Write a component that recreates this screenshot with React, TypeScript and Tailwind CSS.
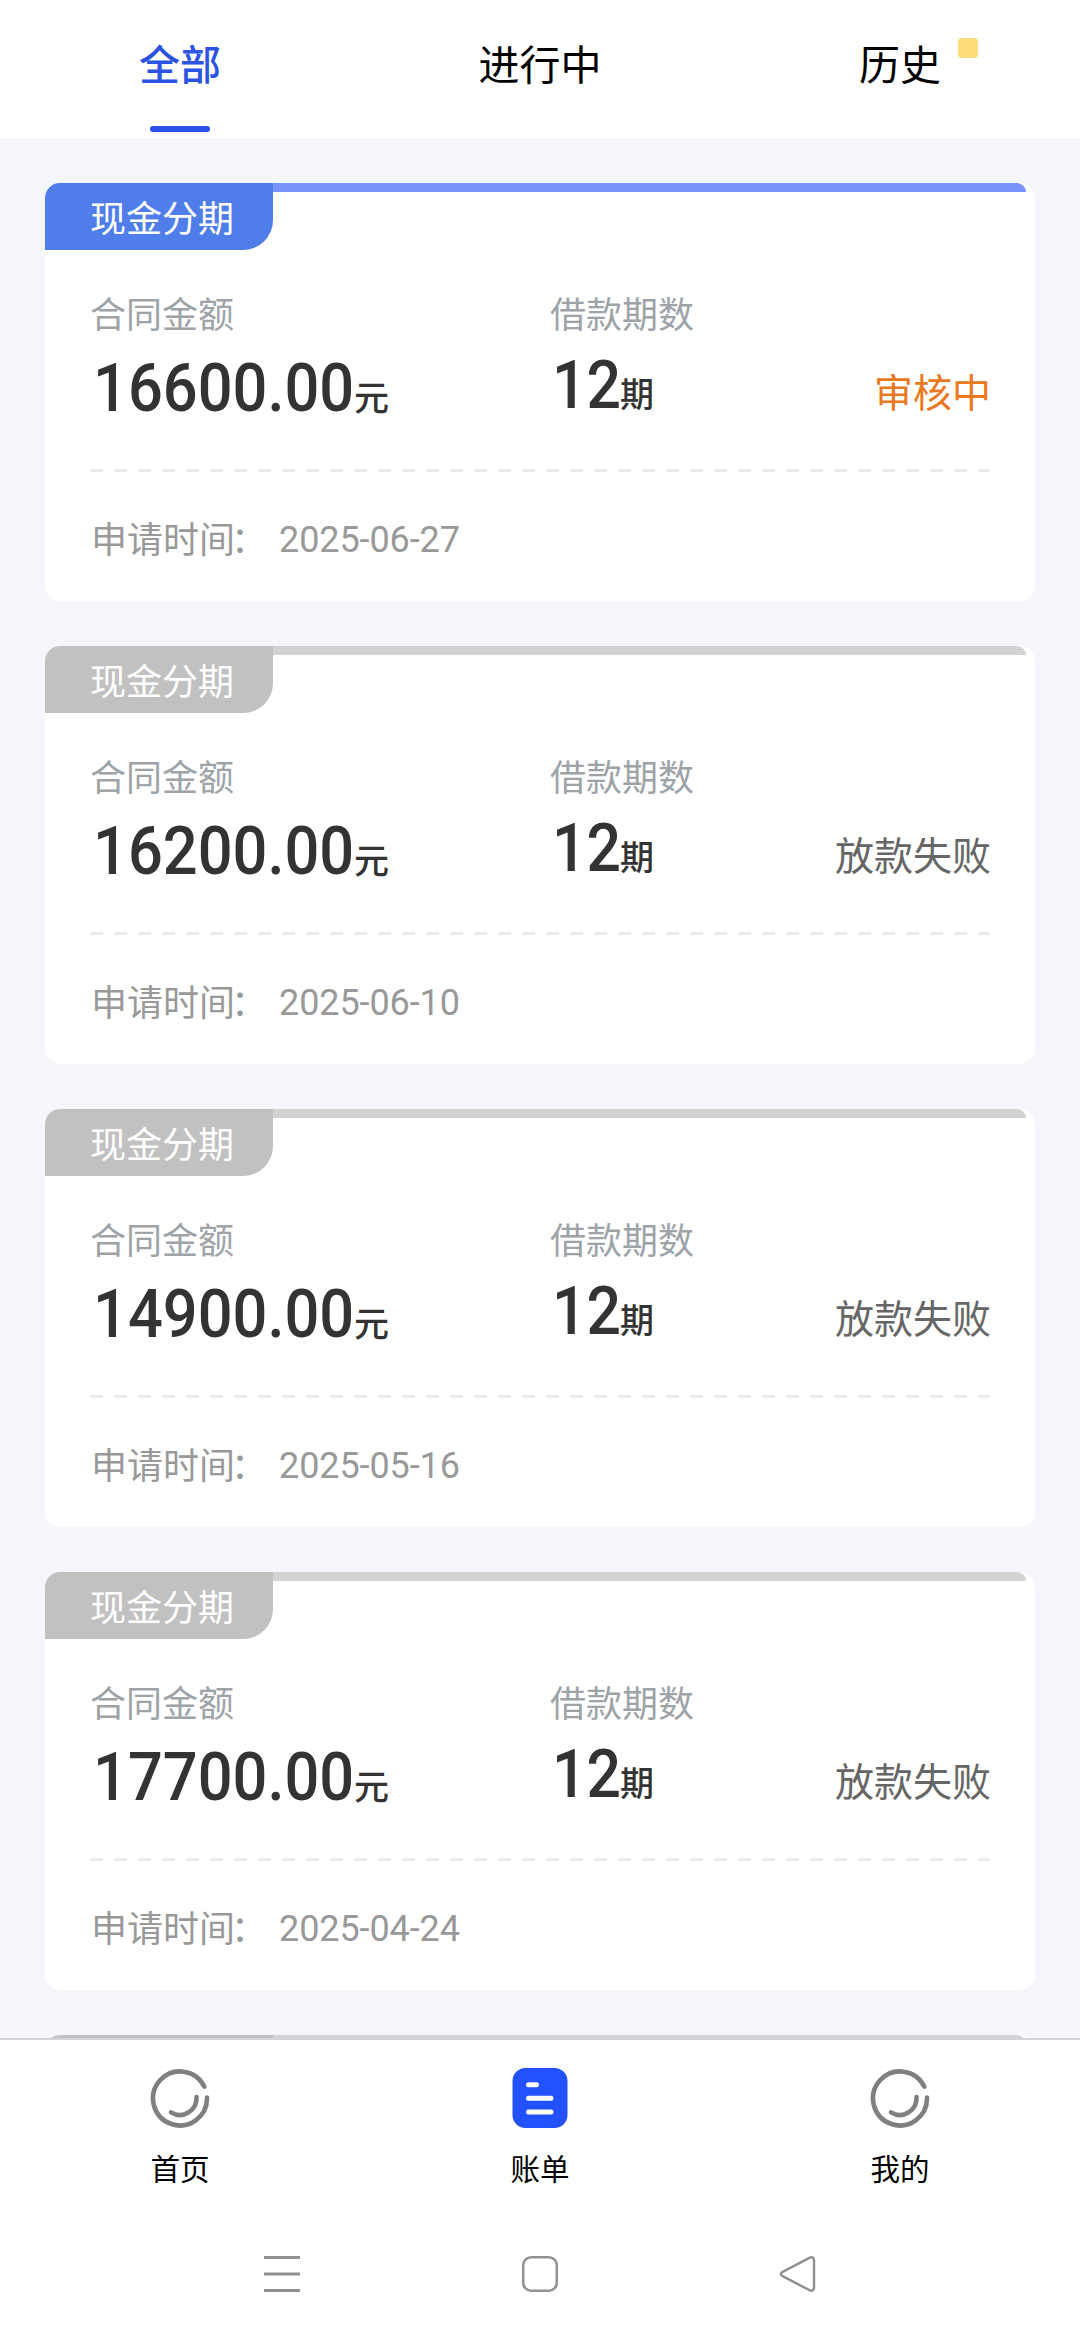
import { clsx } from 'clsx';

interface Bill {
  amount: string;
  periods: number;
  status: string;
  date: string;
  active?: boolean;
}

const tabs = [
  { label: '全部', active: true },
  { label: '进行中' },
  { label: '历史', badge: true },
];

const bills: Bill[] = [
  { amount: '16600.00', periods: 12, status: '审核中', date: '2025-06-27', active: true },
  { amount: '16200.00', periods: 12, status: '放款失败', date: '2025-06-10' },
  { amount: '14900.00', periods: 12, status: '放款失败', date: '2025-05-16' },
  { amount: '17700.00', periods: 12, status: '放款失败', date: '2025-04-24' },
];

function CardHeader({ title, active }: { title?: string; active?: boolean }) {
  return (
    <div className="flex items-start pr-[9px]">
      <div
        className={clsx(
          'flex h-[67px] w-[228px] items-center rounded-tl-[15px] rounded-br-[30px] pl-[45px] pt-[7px] text-[36px] leading-none text-white',
          active ? 'bg-[#4f7eea]' : 'bg-[#c1c1c1]',
        )}
      >
        {title}
      </div>
      <div className={clsx('h-[9px] flex-1 rounded-tr-[9px]', active ? 'bg-[#7893fa]' : 'bg-[#d2d2d2]')} />
    </div>
  );
}

function BillCard({ bill }: { bill: Bill }) {
  return (
    <div className="h-[418px] shrink-0 rounded-[15px] bg-white">
      <CardHeader title="现金分期" active={bill.active} />
      <div className="px-[45px]">
        <div className="flex h-[219px] pt-[44px]">
          <div className="w-[459px]">
            <div className="text-[36px] leading-[44px] text-[#9ea3a8]">合同金额</div>
            <div className="mt-[13px] flex items-baseline text-[#333]">
              <span className="ml-[3px] w-[262px] origin-left scale-x-[0.93] whitespace-nowrap text-[66px] font-medium leading-[76px]">{bill.amount}</span>
              <span className="-ml-px text-[35px] font-medium leading-none">元</span>
            </div>
          </div>
          <div className="flex-1 pl-px">
            <div className="text-[36px] leading-[44px] text-[#9ea3a8]">借款期数</div>
            <div className="mt-[10px] flex items-baseline text-[#333]">
              <span className="ml-[2px] w-[68px] origin-left scale-x-[0.92] text-[66px] font-medium leading-[76px]">{bill.periods}</span>
              <span className="relative -top-px text-[34px] font-medium leading-none">期</span>
            </div>
          </div>
          <div className={clsx('-mr-px pt-[75px] text-[39px] leading-[50px]', bill.active ? 'text-[#e9781f]' : 'text-[#666]')}>
            {bill.status}
          </div>
        </div>
        <div className="h-[3px] bg-[repeating-linear-gradient(90deg,#ebebeb_0_13px,transparent_13px_24px)]" />
        <div className="flex h-[132px] items-center pl-px pt-[5px] text-[36px] leading-none text-[#999]">
          <span className="w-[144px]">申请时间</span>
          <span className="-ml-[4px] w-[48px]">：</span>
          <span className="-mt-px tracking-[-0.1px]">{bill.date}</span>
        </div>
      </div>
    </div>
  );
}

function RingIcon() {
  return (
    <svg width="60" height="60" viewBox="0 0 60 60" fill="none" stroke="#7f7f7f" strokeWidth="4.6" strokeLinecap="round">
      <path d="M54.3 18.6A27 27 0 1 0 57 29.6" />
      <path d="M46.5 29A16.8 16.8 0 0 1 21 44.4" />
    </svg>
  );
}

function BillIcon() {
  return (
    <svg width="60" height="60" viewBox="0 0 60 60" fill="none">
      <rect x="2.5" y="0" width="55" height="60" rx="13" fill="#2251ff" />
      <path d="M18.5 16.8H26.5M18.5 30.3H41M18.5 44H41" stroke="#fff" strokeWidth="5" strokeLinecap="round" />
    </svg>
  );
}

const navItems = [
  { label: '首页', icon: <RingIcon /> },
  { label: '账单', icon: <BillIcon /> },
  { label: '我的', icon: <RingIcon /> },
];

export default function App() {
  return (
    <div className="flex h-[2340px] w-[1080px] flex-col overflow-hidden bg-[#f5f6fb] font-[Roboto,'Noto_Sans_CJK_SC',sans-serif]">
      <header className="grid h-[138px] shrink-0 grid-cols-3 bg-white">
        {tabs.map((t) => (
          <div key={t.label} className="flex flex-col items-center pt-[41px]">
            <div className={clsx('relative text-[41px] leading-[50px]', t.active ? 'font-medium text-[#2b54e4]' : 'text-black')}>
              {t.label}
              {t.badge && <span className="absolute -top-[3px] left-[99px] size-5 rounded-[4px] bg-[#fddd78]" />}
            </div>
            {t.active && <div className="mt-[35px] h-[6px] w-[60px] rounded-full bg-[#2a50e8]" />}
          </div>
        ))}
      </header>

      <main className="flex min-h-0 flex-1 flex-col gap-[45px] overflow-hidden px-[45px] pt-[45px]">
        {bills.map((b) => (
          <BillCard key={b.date} bill={b} />
        ))}
        <div className="h-[418px] shrink-0 rounded-[15px] bg-white">
          <CardHeader />
        </div>
      </main>

      <nav className="grid h-[169px] shrink-0 grid-cols-3 border-t-2 border-[#d4d4d7] bg-white pt-[28px]">
        {navItems.map((n) => (
          <div key={n.label} className="flex flex-col items-center">
            {n.icon}
            <span className="mt-[22px] text-[29.5px] leading-[40px] text-black">{n.label}</span>
          </div>
        ))}
      </nav>

      {/* system navigation */}
      <div className="flex h-[133px] shrink-0 justify-center gap-[218px] bg-white pt-[47px] text-[#919191]">
        <svg width="40" height="40" viewBox="0 0 40 40" fill="none" stroke="currentColor" strokeWidth="3">
          <path d="M2 3.5H38M2 20H38M2 36.5H38" />
        </svg>
        <svg width="40" height="40" viewBox="0 0 40 40" fill="none" stroke="currentColor" strokeWidth="2.5">
          <rect x="3.2" y="3.2" width="33.6" height="33.6" rx="8" />
        </svg>
        <svg width="40" height="40" viewBox="0 0 40 40" fill="none" stroke="currentColor" strokeWidth="2.5" strokeLinejoin="round">
          <path d="M4.6 17.9L31.4 3.8Q36 2 36 6.6V33.4Q36 38 31.4 36.2L4.6 22.1Q1.2 20 4.6 17.9Z" />
        </svg>
      </div>
    </div>
  );
}
